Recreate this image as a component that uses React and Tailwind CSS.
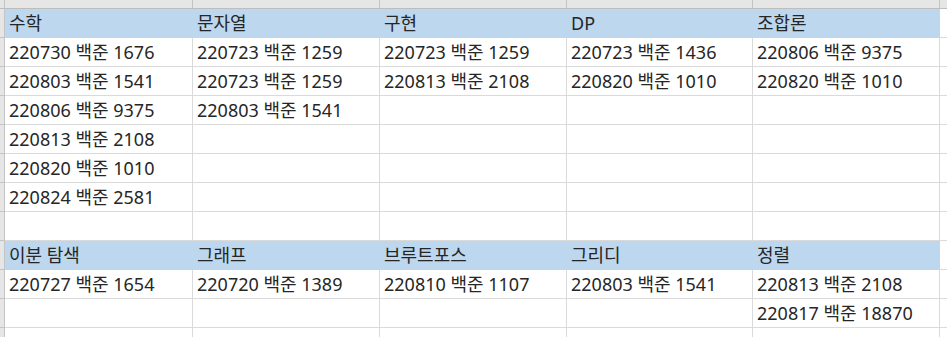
import React from 'react'

const widths = ['w-[188px]', 'w-[187px]', 'w-[187px]', 'w-[186px]', 'w-[187px]']

const sections = [
  {
    headers: ['수학', '문자열', '구현', 'DP', '조합론'],
    rows: [
      ['220730 백준 1676', '220723 백준 1259', '220723 백준 1259', '220723 백준 1436', '220806 백준 9375'],
      ['220803 백준 1541', '220723 백준 1259', '220813 백준 2108', '220820 백준 1010', '220820 백준 1010'],
      ['220806 백준 9375', '220803 백준 1541', '', '', ''],
      ['220813 백준 2108', '', '', '', ''],
      ['220820 백준 1010', '', '', '', ''],
      ['220824 백준 2581', '', '', '', ''],
      ['', '', '', '', ''],
    ],
  },
  {
    headers: ['이분 탐색', '그래프', '브루트포스', '그리디', '정렬'],
    rows: [
      ['220727 백준 1654', '220720 백준 1389', '220810 백준 1107', '220803 백준 1541', '220813 백준 2108'],
      ['', '', '', '', '220817 백준 18870'],
      ['', '', '', '', ''],
    ],
  },
]

function Row({ cells, header = false }) {
  return (
    <div className="flex h-[29px] shrink-0">
      <div className="w-[5px] shrink-0 bg-[#e6e6e6] border-r border-b border-[#c4c4c4]" />
      {cells.map((text, i) => (
        <div
          key={i}
          className={
            'shrink-0 flex items-center pl-[4px] whitespace-nowrap overflow-hidden border-r border-b ' +
            widths[i] +
            (header ? ' bg-[#bdd7ee] border-[#bdd7ee]' : ' bg-white border-[#dadada]')
          }
        >
          {text}
        </div>
      ))}
      <div className="flex-1 bg-white border-b border-[#dadada]" />
    </div>
  )
}

export default function App() {
  return (
    <div
      className="w-[947px] h-[337px] overflow-hidden flex flex-col bg-white text-[18px] text-[#262626]"
      style={{ fontFamily: '"Noto Sans", "Noto Sans CJK KR", sans-serif' }}
    >
      {/* column header strip */}
      <div className="flex h-[9px] shrink-0 bg-[#e6e6e6] border-b border-[#bdbdbd]">
        <div className="w-[5px] shrink-0 border-r border-[#c4c4c4]" />
        {widths.map((w, i) => (
          <div key={i} className={'shrink-0 border-r border-[#c4c4c4] ' + w} />
        ))}
        <div className="flex-1" />
      </div>
      {sections.map((s, si) => (
        <React.Fragment key={si}>
          <Row cells={s.headers} header />
          {s.rows.map((r, ri) => (
            <Row key={ri} cells={r} />
          ))}
        </React.Fragment>
      ))}
    </div>
  )
}
